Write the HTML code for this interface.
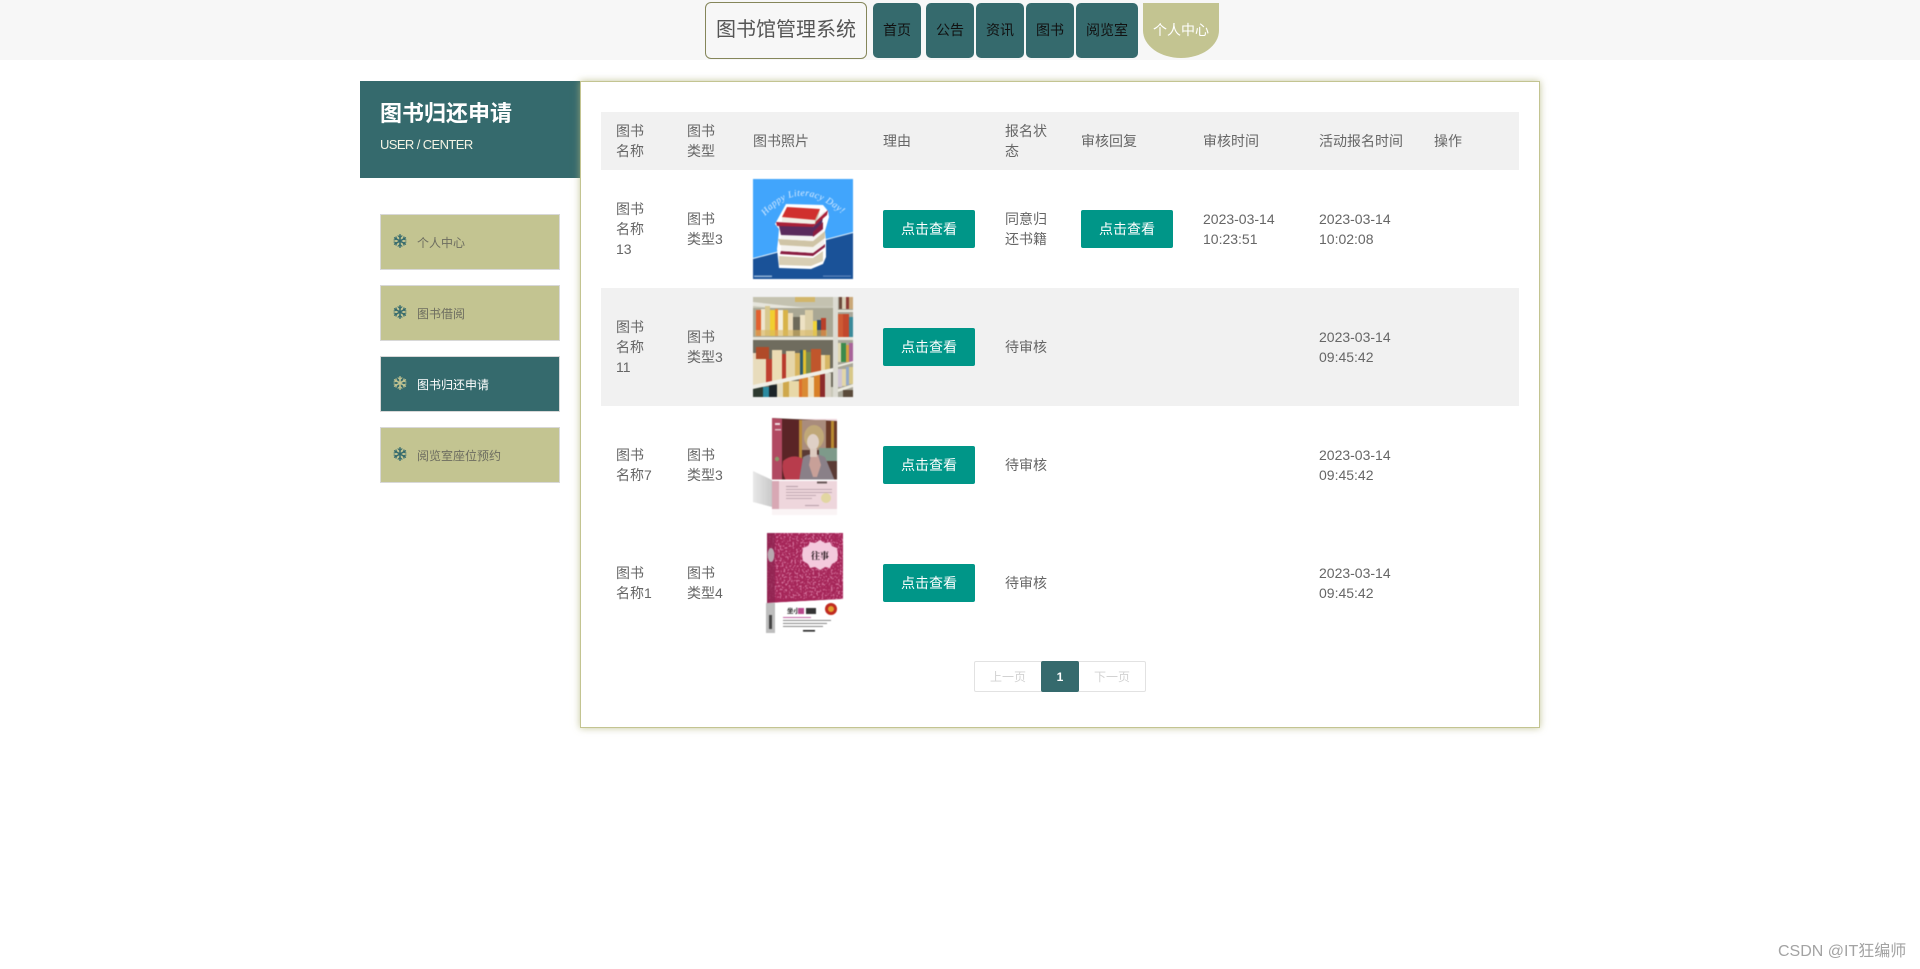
<!DOCTYPE html>
<html lang="zh"><head><meta charset="utf-8"><title>图书馆管理系统</title>
<style>
*{box-sizing:border-box}
html,body{margin:0;padding:0;width:1920px;height:969px;overflow:hidden;background:#fff}
body{font-family:"Liberation Sans","Noto Sans CJK SC",sans-serif;font-size:14px;color:#666;position:relative}
.abs{position:absolute}
#hd{left:0;top:0;width:1920px;height:60px;background:#f7f7f7}
#logo{left:705px;top:2px;width:162px;height:57px;border:1px solid #85865a;border-radius:6px;background:#f7f7f7;color:#555;font-size:20px;line-height:55px;text-align:center}
.nv{top:3px;height:55px;background:#356a6d;border-radius:5px;color:#111;font-size:14px;line-height:55px;text-align:center}
#me{left:1143px;top:3px;width:76px;height:55px;background:#c3c491;border-radius:0 0 50% 50%;color:#fff;font-size:14px;line-height:55px;text-align:center}
#lh{left:360px;top:81px;width:220px;height:97px;background:#356a6d;color:#fff}
#lh b{position:absolute;left:20px;top:17px;font-size:22px;line-height:32px;white-space:nowrap}
#lh span{position:absolute;left:20px;top:54px;font-size:13px;letter-spacing:-.6px;line-height:20px;white-space:nowrap;color:#f4f4e4}
.mi{left:380px;width:180px;height:56px;background:#c3c491;border:1px solid #d8d8d8;color:#6d6d60;font-size:12px}
.mi.on{background:#356a6d;color:#fff}
.mi svg{position:absolute;left:12px;top:20px}
.mi span{position:absolute;left:36px;top:20px;line-height:18px;white-space:nowrap}
#main{left:580px;top:81px;width:960px;height:647px;background:#fff;border:1px solid #c3c491;box-shadow:0 0 7px rgba(176,178,120,.75)}
table{position:absolute;left:20px;top:30px;width:918px;border-collapse:collapse;table-layout:fixed}
th,td{padding:9px 15px;font-weight:400;text-align:left;line-height:20px;vertical-align:middle;color:#666;font-size:14px}
thead tr,tr.ev{background:#f1f1f1}
thead th{height:58px}
tbody td{height:118px}
td.im{padding:9px 15px}
td svg{display:block;width:100px;height:100px;filter:blur(.4px)}
.btn{display:block;width:92px;height:38px;background:#009688;color:#fff;border-radius:2px;text-align:center;line-height:38px;font-size:14px}
#pg{left:974px;top:661px;width:172px;height:31px;border:1px solid #e2e2e2;border-radius:2px;background:#fff;color:#d2d2d2;font-size:12px}
#pg span{position:absolute;top:0;line-height:31px;text-align:center}
#pg i{position:absolute;left:66px;top:-1px;width:38px;height:31px;background:#356a6d;color:#fff;font-style:normal;border-radius:2px;text-align:center;line-height:33px;font-weight:700}
#wm{left:1778px;top:941px;font-size:16px;line-height:22px;color:#a3a3a3;white-space:nowrap}
</style></head><body>
<div class="abs" id="hd"></div>
<div class="abs" id="logo">图书馆管理系统</div>
<div class="abs nv" style="left:873px;width:48px">首页</div>
<div class="abs nv" style="left:926px;width:48px">公告</div>
<div class="abs nv" style="left:976px;width:48px">资讯</div>
<div class="abs nv" style="left:1026px;width:48px">图书</div>
<div class="abs nv" style="left:1076px;width:62px">阅览室</div>
<div class="abs" id="me">个人中心</div>

<div class="abs" id="lh"><b>图书归还申请</b><span>USER / CENTER</span></div>

<svg width="0" height="0" style="position:absolute"><defs>
<g id="fl" fill="none" stroke-width="1.5" stroke-linecap="round">
<path d="M7 .8V13.2M1.6 3.9L12.4 10.1M1.6 10.1L12.4 3.9"/>
<path d="M5 1.8L7 3.6L9 1.8M5 12.2L7 10.4L9 12.2M1 6L3.6 5.2L3 2.8M13 6L10.4 5.2L11 2.8M1 8L3.6 8.8L3 11.2M13 8L10.4 8.8L11 11.2" stroke-width="1"/>
</g></defs></svg>

<div class="abs mi" style="top:214px"><svg width="14" height="14" stroke="#356a6d" style="top:19px"><use href="#fl"/></svg><span style="top:19px">个人中心</span></div>
<div class="abs mi" style="top:285px"><svg width="14" height="14" stroke="#356a6d" style="top:19px"><use href="#fl"/></svg><span style="top:19px">图书借阅</span></div>
<div class="abs mi on" style="top:356px"><svg width="14" height="14" stroke="#c3c491" style="top:19px"><use href="#fl"/></svg><span style="top:19px">图书归还申请</span></div>
<div class="abs mi" style="top:427px"><svg width="14" height="14" stroke="#356a6d" style="top:19px"><use href="#fl"/></svg><span style="top:19px">阅览室座位预约</span></div>

<div class="abs" id="main">
<table>
<colgroup><col style="width:71px"><col style="width:66px"><col style="width:130px"><col style="width:122px"><col style="width:76px"><col style="width:122px"><col style="width:116px"><col style="width:115px"><col style="width:100px"></colgroup>
<thead><tr><th>图书<br>名称</th><th>图书<br>类型</th><th>图书照片</th><th>理由</th><th>报名状<br>态</th><th>审核回复</th><th>审核时间</th><th>活动报名时间</th><th>操作</th></tr></thead>
<tbody>
<tr><td>图书<br>名称<br>13</td><td>图书<br>类型3</td>
<td class="im"><svg viewBox="0 0 100 100">
<rect width="100" height="100" fill="#41a5fc"/>
<path d="M0 80L100 54V100H0Z" fill="#1a5298"/>
<path d="M0 79.5L100 53.5" stroke="#e4f0fa" stroke-width="1"/>
<path id="arc1" d="M12 37Q46 -3 90 36" fill="none"/>
<text font-family="Liberation Serif,serif" font-style="italic" font-size="9.5" fill="#dcedff" letter-spacing=".4"><textPath href="#arc1">Happy Literacy Day!</textPath></text>
<path d="M22 45L33 25L70 26L75 32L76 38L72 52L73 62L73 78L70 85L58 90L26 89L24 70L25 62L26 50Z" fill="#fff"/>
<path d="M26 77L60 79L70 72V82L58 87L26 86Z" fill="#d8ceb4"/>
<path d="M27 75L60 77L72 68V65L60 74L28 72Z" fill="#8a1c40"/>
<path d="M28 66L60 68L71 60V66L60 74L28 72Z" fill="#f4f2ee"/>
<path d="M25 60L60 62L72 52V59L60 68L27 66Z" fill="#cfc4a6"/>
<path d="M28 56L60 57L70 50V53L60 62L28 60Z" fill="#f6f4f2"/>
<path d="M60 52L70 43L70 50L60 58Z" fill="#8a1c40"/>
<path d="M26 47L60 46L70 38L69 44L60 53L60 57L28 56Z" fill="#5a2a5c"/>
<path d="M60 42L72 32L71 38L60 48Z" fill="#eceae4"/>
<path d="M23 43L60 45L75 31L74 36L60 48L24 47Z" fill="#a82038"/>
<path d="M29 38L62 41V45L29 43Z" fill="#f2efe6"/>
<path d="M62 41L67 30L66 35L62 45Z" fill="#c8bca0"/>
<path d="M29 38L34 28L67 30L62 41Z" fill="#d0302e"/>
<rect x="1" y="96.5" width="18" height="1.6" fill="#8fb0d4"/><rect x="70" y="96.5" width="28" height="1.2" fill="#5f86bc"/>
</svg></td>
<td><span class="btn">点击查看</span></td><td>同意归<br>还书籍</td><td><span class="btn">点击查看</span></td><td>2023-03-14<br>10:23:51</td><td>2023-03-14<br>10:02:08</td><td></td></tr>

<tr class="ev"><td>图书<br>名称<br>11</td><td>图书<br>类型3</td>
<td class="im"><svg viewBox="0 0 100 100">
<defs><clipPath id="r2c"><path d="M0 42H80V72L0 89Z"/></clipPath><clipPath id="r3c"><path d="M0 90L80 74V100H0Z"/></clipPath></defs>
<rect width="100" height="100" fill="#c9c8b8"/>
<rect width="80" height="9" fill="#c4c2b0"/><rect x="42" y="0" width="20" height="5" fill="#d2b66a"/>
<path d="M0 5L80 14V17L0 9Z" fill="#e6e5dc"/>
<rect y="11" width="80" height="29" fill="#a9a794"/>
<g>
<rect x="3" y="13" width="5" height="26" fill="#e2602f"/><rect x="8" y="12" width="4" height="27" fill="#efe6cf"/><rect x="12" y="9" width="5" height="30" fill="#d8c890"/><rect x="17" y="13" width="5" height="26" fill="#f1cf2f"/><rect x="22" y="12" width="3" height="27" fill="#e8893a"/><rect x="25" y="13" width="5" height="26" fill="#f4efdf"/><rect x="30" y="13" width="5" height="26" fill="#d8b34a"/><rect x="35" y="16" width="5" height="23" fill="#ecdcbc"/><rect x="40" y="20" width="7" height="19" fill="#6e6a5a"/><rect x="47" y="18" width="5" height="21" fill="#eee2c4"/><rect x="52" y="13" width="8" height="26" fill="#dccfa8"/><rect x="60" y="24" width="4" height="15" fill="#f0d437"/><rect x="64" y="23" width="4" height="16" fill="#324c6c"/><rect x="68" y="21" width="5" height="18" fill="#b8402a"/>
</g>
<rect x="2" y="33" width="72" height="6" fill="#d9b862" opacity=".6"/>
<rect y="40" width="81" height="3" fill="#e4e3d8"/>
<rect y="43" width="80" height="47" fill="#6f6c5e"/>
<g clip-path="url(#r2c)">
<rect x="0" y="56" width="3" height="36" fill="#e6d4b8"/><rect x="3" y="50" width="13" height="42" fill="#b04a28"/><rect x="0" y="62" width="13" height="30" fill="#e8dcbc"/><rect x="13" y="62" width="6" height="30" fill="#c04030"/><rect x="19" y="53" width="10" height="36" fill="#ecdcb4"/><rect x="29" y="57" width="4" height="30" fill="#b83a2c"/><rect x="33" y="54" width="9" height="30" fill="#e6d6aa"/><rect x="42" y="56" width="5" height="28" fill="#d8b560"/><rect x="47" y="53" width="3" height="28" fill="#2c5a6c"/><rect x="50" y="53" width="3" height="28" fill="#e2c030"/><rect x="53" y="55" width="5" height="25" fill="#7a8c4c"/><rect x="58" y="52" width="10" height="26" fill="#c0562c"/><rect x="68" y="58" width="4" height="20" fill="#ecd8a8"/><rect x="72" y="58" width="5" height="18" fill="#d6b664"/>
</g>
<g clip-path="url(#r3c)">
<rect x="0" y="90" width="10" height="10" fill="#2e3a30"/><rect x="10" y="90" width="6" height="10" fill="#2a8aa0"/><rect x="16" y="88" width="8" height="12" fill="#1c2428"/><rect x="24" y="85" width="6" height="15" fill="#e4dcc0"/><rect x="30" y="84" width="6" height="16" fill="#cfa84c"/><rect x="36" y="84" width="10" height="16" fill="#e8d8a8"/><rect x="46" y="82" width="3" height="18" fill="#dc6e2c"/><rect x="49" y="80" width="6" height="20" fill="#d98a34"/><rect x="55" y="80" width="6" height="20" fill="#ede0c0"/><rect x="61" y="77" width="6" height="23" fill="#d88028"/><rect x="67" y="76" width="5" height="24" fill="#8c2a2a"/><rect x="72" y="76" width="6" height="24" fill="#d7d3c6"/>
</g>
<path d="M0 88L80 71V75L0 92Z" fill="#efeee6"/>
<rect x="80" y="0" width="5" height="100" fill="#dcdbd2"/>
<rect x="85" width="15" height="100" fill="#a8a698"/>
<rect x="86" y="0" width="3" height="12" fill="#6c4a3c"/><rect x="89" y="0" width="4" height="12" fill="#d8cfb8"/><rect x="93" y="0" width="3" height="12" fill="#8c3a34"/><rect x="96" y="0" width="4" height="12" fill="#caa878"/>
<rect x="85" y="13" width="15" height="2" fill="#e6e5da"/>
<rect x="85" y="17" width="5" height="23" fill="#ce5a34"/><rect x="90" y="17" width="6" height="23" fill="#c2482c"/><rect x="96" y="20" width="4" height="20" fill="#3a8a9a"/>
<rect x="85" y="40" width="15" height="3" fill="#e6e5da"/>
<rect x="85" y="46" width="3" height="19" fill="#e0d8b0"/><rect x="88" y="46" width="5" height="19" fill="#3c8a4c"/><rect x="93" y="48" width="3" height="17" fill="#d8a040"/><rect x="96" y="46" width="4" height="19" fill="#a8649a"/>
<path d="M85 68L100 64V66L85 70Z" fill="#ecebe0"/>
<rect x="85" y="72" width="4" height="18" fill="#cfc4d4"/><rect x="89" y="72" width="4" height="17" fill="#e2d6a8"/><rect x="93" y="70" width="3" height="18" fill="#94a8c8"/><rect x="96" y="70" width="4" height="17" fill="#d8c888"/>
<path d="M85 92L100 87V90L85 95Z" fill="#ecebe0"/><rect x="90" y="93" width="10" height="7" fill="#5a4a3a"/>
</svg></td>
<td><span class="btn">点击查看</span></td><td>待审核</td><td></td><td></td><td>2023-03-14<br>09:45:42</td><td></td></tr>

<tr><td>图书<br>名称7</td><td>图书<br>类型3</td>
<td class="im"><svg viewBox="0 0 100 100">
<defs><linearGradient id="sh" x1="0" x2="1" y1="0" y2="0"><stop offset="0" stop-color="#e8e8e8"/><stop offset="1" stop-color="#c9c9c9"/></linearGradient></defs>
<rect width="100" height="100" fill="#fff"/>
<path d="M0 56L19 65V92L0 87Z" fill="url(#sh)"/>
<rect x="19" y="4" width="65" height="90" fill="#eed6dc"/>
<path d="M19 3L84 6V66H19Z" fill="#5a3a34"/>
<path d="M19 3L29 4V66H19Z" fill="#b14a62"/>
<path d="M29 4L47 5V66H29Z" fill="#5a2426"/>
<rect x="46" y="5" width="3" height="40" fill="#b88a3a"/>
<rect x="49" y="5" width="24" height="30" fill="#a98c7c"/>
<rect x="73" y="6" width="11" height="40" fill="#6a3a28"/><rect x="78" y="6" width="3" height="38" fill="#b88a30"/>
<path d="M66 33H84V46H66Z" fill="#7e9a8a"/>
<path d="M30 46Q40 38 50 44L52 66H33Q28 56 30 46Z" fill="#b83c4c"/>
<path d="M50 42Q60 36 72 42L82 66H46Z" fill="#8a8088"/>
<path d="M58 40L65 40L68 50L64 62L60 62L56 50Z" fill="#c8a098"/>
<ellipse cx="61" cy="22" rx="10" ry="12" fill="#c0a878"/>
<ellipse cx="60" cy="27" rx="6" ry="8" fill="#dfd0c6"/>
<rect x="57" y="34" width="7" height="8" fill="#dccabf"/>
<rect x="19" y="64.5" width="65" height="1.5" fill="#fff"/>
<rect x="19" y="66" width="7" height="28" fill="#d8a8b4"/>
<rect x="22" y="8" width="5" height="2" fill="#eedce0"/><rect x="22" y="14" width="6" height="1.5" fill="#e0b8c0"/><circle cx="24" cy="44" r="2.2" fill="#8a9a6a"/>
<g fill="#b8a0a8"><rect x="33" y="71" width="12" height="1"/><rect x="33" y="74" width="46" height=".8"/><rect x="33" y="77" width="46" height=".8"/><rect x="33" y="80" width="30" height=".8"/><rect x="33" y="83" width="26" height=".8"/><rect x="52" y="90" width="14" height="1"/></g>
<rect x="64" y="66.5" width="10" height="2" fill="#6a5a5a"/>
<circle cx="73" cy="83" r="5" fill="#e2d6a2"/>
<rect x="19" y="94" width="65" height="6" fill="#f6ecef" opacity=".6"/>
</svg></td>
<td><span class="btn">点击查看</span></td><td>待审核</td><td></td><td></td><td>2023-03-14<br>09:45:42</td><td></td></tr>

<tr class=""><td>图书<br>名称1</td><td>图书<br>类型4</td>
<td class="im"><svg viewBox="0 0 100 100">
<defs><filter id="sp" x="0" y="0" width="100%" height="100%"><feTurbulence type="fractalNoise" baseFrequency=".55" numOctaves="2" seed="4"/><feColorMatrix values="0 0 0 0 .96 0 0 0 0 .45 0 0 0 0 .66 0 0 0 7 -3.7"/></filter></defs>
<rect width="100" height="100" fill="#fff"/>
<path d="M14 0H90V66L14 70Z" fill="#a52558"/>
<rect x="14" y="0" width="76" height="66" filter="url(#sp)" opacity=".55"/>
<path d="M14 0H22V70H14Z" fill="#8e2450" opacity=".75"/>
<ellipse cx="18" cy="22" rx="3.4" ry="7" fill="#b8a8b0"/>
<path d="M50 15L55 13L57 9L62 10L67 7L72 10L77 9L79 13L84 15L85 22L84 28L79 31L77 35L72 34L67 37L62 34L57 35L55 31L50 28L49 22Z" fill="#f4c9dd"/>
<text x="58" y="26" font-family="Noto Serif CJK SC,serif" font-size="9" font-weight="700" fill="#1c1014">往事</text>
<path d="M14 70L90 66V100H14Z" fill="#fff"/>
<path d="M13 70H22V100H13Z" fill="#bdbdbd"/>
<rect x="16" y="82" width="3" height="14" fill="#444"/>
<text x="34" y="80" font-family="Noto Sans CJK SC,sans-serif" font-size="6.5" font-weight="700" fill="#222">坐小</text>
<rect x="45" y="75" width="6" height="6" fill="#b8488c"/>
<rect x="53" y="75" width="10" height="6" fill="#333"/>
<circle cx="78" cy="76" r="6" fill="#c02a20"/><circle cx="78" cy="76" r="3" fill="#e0a030"/>
<g fill="#666"><rect x="30" y="84" width="28" height="1" fill="#c060a0"/><rect x="30" y="87" width="48" height=".8"/><rect x="30" y="90" width="44" height=".8"/><rect x="30" y="93" width="40" height=".8"/><rect x="50" y="97" width="12" height="1.6" fill="#222"/></g>
</svg></td>
<td><span class="btn">点击查看</span></td><td>待审核</td><td></td><td></td><td>2023-03-14<br>09:45:42</td><td></td></tr>
</tbody></table>
</div>

<div class="abs" id="pg"><span style="left:0;width:66px">上一页</span><i>1</i><span style="left:104px;width:66px">下一页</span></div>
<div class="abs" id="wm">CSDN @IT狂编师</div>
</body></html>
